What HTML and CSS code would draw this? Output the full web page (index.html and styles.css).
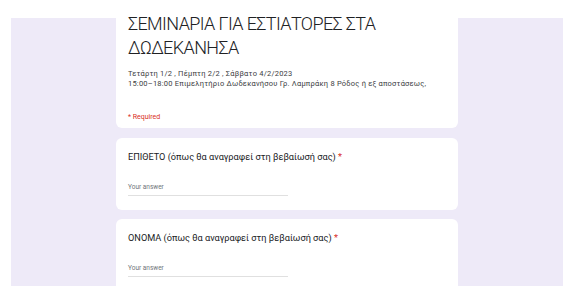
FILE: index.html
```html
<!DOCTYPE html>
<html>
  <head>
    <meta charset="UTF-8" />
    <title>ΣΕΜΙΝΑΡΙΑ ΓΙΑ ΕΣΤΙΑΤΟΡΕΣ ΣΤΑ ΔΩΔΕΚΑΝΗΣΑ</title>
    <link rel="stylesheet" href="styles.css">
  </head>

  <body>
    <div id="frame">
      <div id="form">
        <div class="card headerCard">
          <h1>ΣΕΜΙΝΑΡΙΑ ΓΙΑ ΕΣΤΙΑΤΟΡΕΣ ΣΤΑ ΔΩΔΕΚΑΝΗΣΑ</h1>
          <div class="description">
            Τετάρτη 1/2 , Πέμπτη 2/2 , Σάββατο 4/2/2023<br />
            15:00–18:00 Επιμελητήριο Δωδεκανήσου Γρ. Λαμπράκη 8 Ρόδος ή εξ αποστάσεως,
          </div>
          <div class="required">* Required</div>
        </div>

        <div class="card questionCard">
          <div class="questionLabel">
            ΕΠΙΘΕΤΟ (όπως θα αναγραφεί στη βεβαίωσή σας) <span class="star">*</span>
          </div>
          <div class="answerField">Your answer</div>
        </div>

        <div class="card questionCard lastCard">
          <div class="questionLabel">
            ΟΝΟΜΑ (όπως θα αναγραφεί στη βεβαίωσή σας) <span class="star">*</span>
          </div>
          <div class="answerField">Your answer</div>
        </div>
      </div>
    </div>
  </body>
</html>
```

FILE: styles.css
```css
html,
body {
  margin: 0;
  background-color: #fff;
  overflow: hidden;
}

body {
  font-family: Roboto, "Noto Sans", sans-serif;
  color: #202124;
}

#frame {
  display: flow-root;
  margin: 18px 12px 0 11px;
  height: 268px;
  background-color: #eeeaf8;
}

#form {
  width: 342px;
  margin-left: 105px;
}

.card {
  background-color: #fff;
  border-radius: 6px;
  margin-bottom: 9px;
}

.headerCard {
  margin-top: -18px;
  margin-bottom: 10px;
  height: 128px;
  padding: 12px 12px 0 12px;
  box-sizing: border-box;
}

h1 {
  margin: 0;
  font-size: 18px;
  font-weight: 300;
  line-height: 24px;
  letter-spacing: -0.6px;
}

.description {
  margin-top: 9px;
  font-size: 7.5px;
  line-height: 10px;
  letter-spacing: 0.22px;
  color: #3c4043;
}

.required {
  margin-top: 24px;
  font-size: 7px;
  color: #d93025;
}

.questionCard {
  height: 72px;
  padding: 13px 12px 0 12px;
  box-sizing: border-box;
}

.lastCard {
  height: 90px;
}

.questionLabel {
  font-size: 9.2px;
  line-height: 12px;
}

.star {
  color: #d93025;
}

.answerField {
  margin-top: 20px;
  width: 160px;
  font-size: 6.5px;
  color: #70757a;
  padding-bottom: 4px;
  border-bottom: 1px solid #e0e0e0;
}
```
